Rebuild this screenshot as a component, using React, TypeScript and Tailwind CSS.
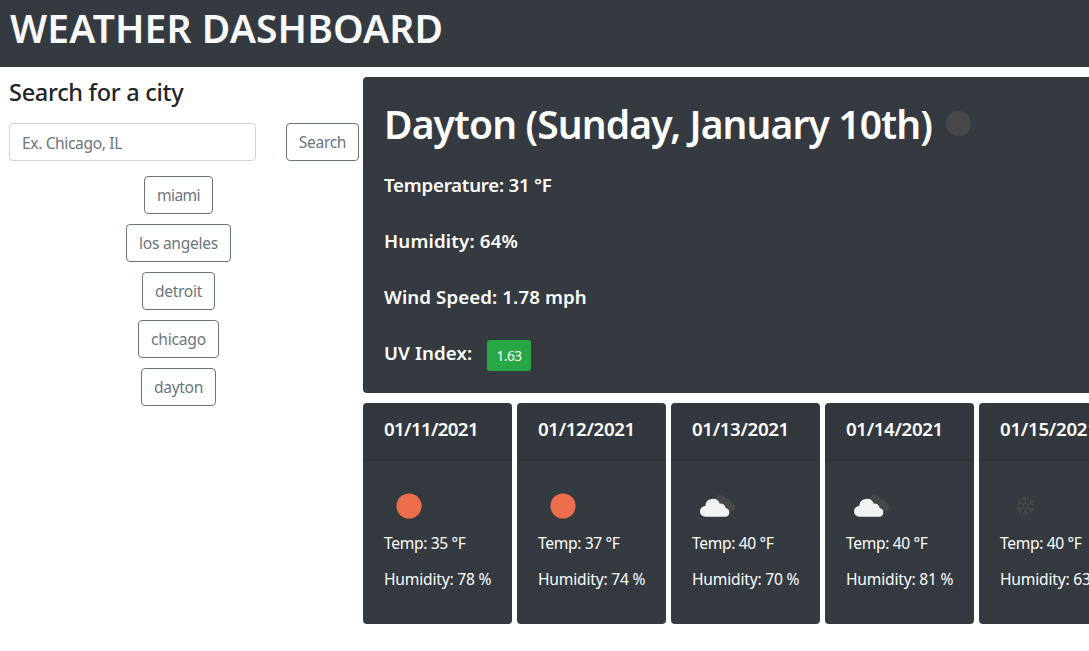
const cities = [
  { name: "miami", style: "w-[69px] tracking-[-0.6px]" },
  { name: "los angeles", style: "w-[105px] tracking-[-0.28px]" },
  { name: "detroit", style: "w-[73px] tracking-[-0.3px]" },
  { name: "chicago", style: "w-[81px] tracking-[-0.2px]" },
  { name: "dayton", style: "w-[75px] tracking-[-0.33px]" },
];

type Sky = "sun" | "clouds" | "snow";

const forecast: { date: string; dateStyle: string; sky: Sky; temp: number; humidity: number }[] = [
  { date: "01/11/2021", dateStyle: "tracking-[-0.65px]", sky: "sun", temp: 35, humidity: 78 },
  { date: "01/12/2021", dateStyle: "tracking-[-0.35px]", sky: "sun", temp: 37, humidity: 74 },
  { date: "01/13/2021", dateStyle: "tracking-[-0.35px]", sky: "clouds", temp: 40, humidity: 70 },
  { date: "01/14/2021", dateStyle: "tracking-[-0.35px]", sky: "clouds", temp: 40, humidity: 81 },
  { date: "01/15/2021", dateStyle: "tracking-[-0.28px]", sky: "snow", temp: 40, humidity: 63 },
];

function SkyIcon({ sky }: { sky: Sky }) {
  return (
    <svg viewBox="0 0 50 50" className="block size-[50px] shrink-0">
      {sky === "sun" && <circle cx="25" cy="25" r="12.6" fill="#ec6e4c" />}
      {sky === "clouds" && (
        <>
          <g fill="#484848">
            <circle cx="28.5" cy="20" r="6" />
            <circle cx="35.3" cy="22.300" r="4.300" />
            <circle cx="39" cy="26" r="4.200" />
            <path d="M28 20L36 19L39 30H32z" />
          </g>
          <g fill="#f2f2f2" stroke="#343a40" strokeWidth="1.6" paintOrder="stroke">
            <path d="M13.500 35.800a5.400 5.400 0 0 1-.3-10.800a7.600 7.600 0 0 1 14.700-2.300a4.500 4.500 0 0 1 5.700 4.200a4.500 4.500 0 0 1-.3 8.900z" />
          </g>
        </>
      )}
      {sky === "snow" && (
        <g stroke="#484848" strokeWidth="1.5" fill="none" strokeLinecap="round">
          {[0, 60, 120, 180, 240, 300].map((angle) => (
            <path key={angle} d="M25.500 22.500V16M22.700 17.200L25.500 20L28.300 17.200M25.500 22.400L28 23.800" transform={`rotate(${angle} 25.5 25.2)`} />
          ))}
        </g>
      )}
    </svg>
  );
}

const outline = "h-[38px] shrink-0 rounded-[4px] border border-[#6c757d] pt-px text-center text-[15.6px] leading-none whitespace-nowrap text-[#6c757d]";
const stat = "mb-8 h-6 whitespace-nowrap text-[18.7px] leading-6 font-semibold";

export default function App() {
  return (
    <div className="h-[651px] w-full overflow-hidden bg-white font-['Noto_Sans',sans-serif] text-[#212529]">
      <header className="h-[67px] bg-[#343a40] pl-2.5 pt-1">
        <h1 className="text-[39px] leading-[48px] font-semibold tracking-[0.1px] text-[#f8f9fa]">WEATHER DASHBOARD</h1>
      </header>
      <div className="flex">
        <aside className="w-[363px] shrink-0 pt-[11px] pl-[9px]">
          <h2 className="h-[29px] text-[23.5px] leading-[29px] font-medium tracking-[-0.3px]">Search for a city</h2>
          <div className="mt-4 flex gap-[30px]">
            <input
              placeholder="Ex. Chicago, IL"
              className="h-[38px] w-[247px] rounded-[4px] border border-[#ced4da] px-3 pt-0.5 text-[15.6px] tracking-[-0.38px] placeholder:text-[#6c757d]"
            />
            <button className={`${outline} w-[73px] tracking-[-0.35px]`}>Search</button>
          </div>
          <div className="mt-[15px] flex w-[339px] flex-col items-center gap-2.5">
            {cities.map((city) => (
              <button key={city.name} className={`${outline} ${city.style}`}>{city.name}</button>
            ))}
          </div>
        </aside>
        <main className="mt-2.5 w-[765px] shrink-0 text-white">
          <section className="h-[316px] rounded-[4px] bg-[#343a40] pt-[22px] pl-[21px]">
            <div className="flex h-[50px] items-center">
              <h2 className="w-[549px] shrink-0 whitespace-nowrap text-[39px] leading-[48px] font-semibold tracking-[-0.88px]">Dayton (Sunday, January 10th)</h2>
              <svg viewBox="0 0 50 50" className="size-[50px] shrink-0">
                <circle cx="25.300" cy="24.700" r="12.600" fill="#484848" />
              </svg>
            </div>
            <div className="mt-6">
              <p className={`${stat} tracking-[-0.24px]`}>Temperature: 31 °F</p>
              <p className={`${stat} tracking-[0.17px]`}>Humidity: 64%</p>
              <p className={`${stat} tracking-[0.1px]`}>Wind Speed: 1.78 mph</p>
              <div className="flex">
                <p className={`${stat} w-[103px] tracking-[0.1px]`}>UV Index:</p>
                <span className="-mt-px h-[31px] w-11 rounded-[3px] bg-[#28a745] text-center text-[13.7px] leading-[31px] tracking-[-0.5px]">1.63</span>
              </div>
            </div>
          </section>
          <section className="mt-2.5 flex gap-[5px]">
            {forecast.map((day) => (
              <article key={day.date} className="h-[221px] w-[149px] shrink-0 overflow-hidden rounded-[4px] bg-[#343a40]">
                <h3 className={`h-[58px] border-b border-black/15 bg-black/[0.03] pt-3.5 pl-[21px] text-[18.7px] leading-6 font-semibold ${day.dateStyle}`}>{day.date}</h3>
                <div className="pt-5 pl-[21px] text-[15.6px] leading-6 whitespace-nowrap">
                  <SkyIcon sky={day.sky} />
                  <p className="tracking-[-0.35px]">Temp: {day.temp} °F</p>
                  <p className="mt-3 tracking-[-0.2px]">Humidity: {day.humidity} %</p>
                </div>
              </article>
            ))}
          </section>
        </main>
      </div>
    </div>
  );
}
